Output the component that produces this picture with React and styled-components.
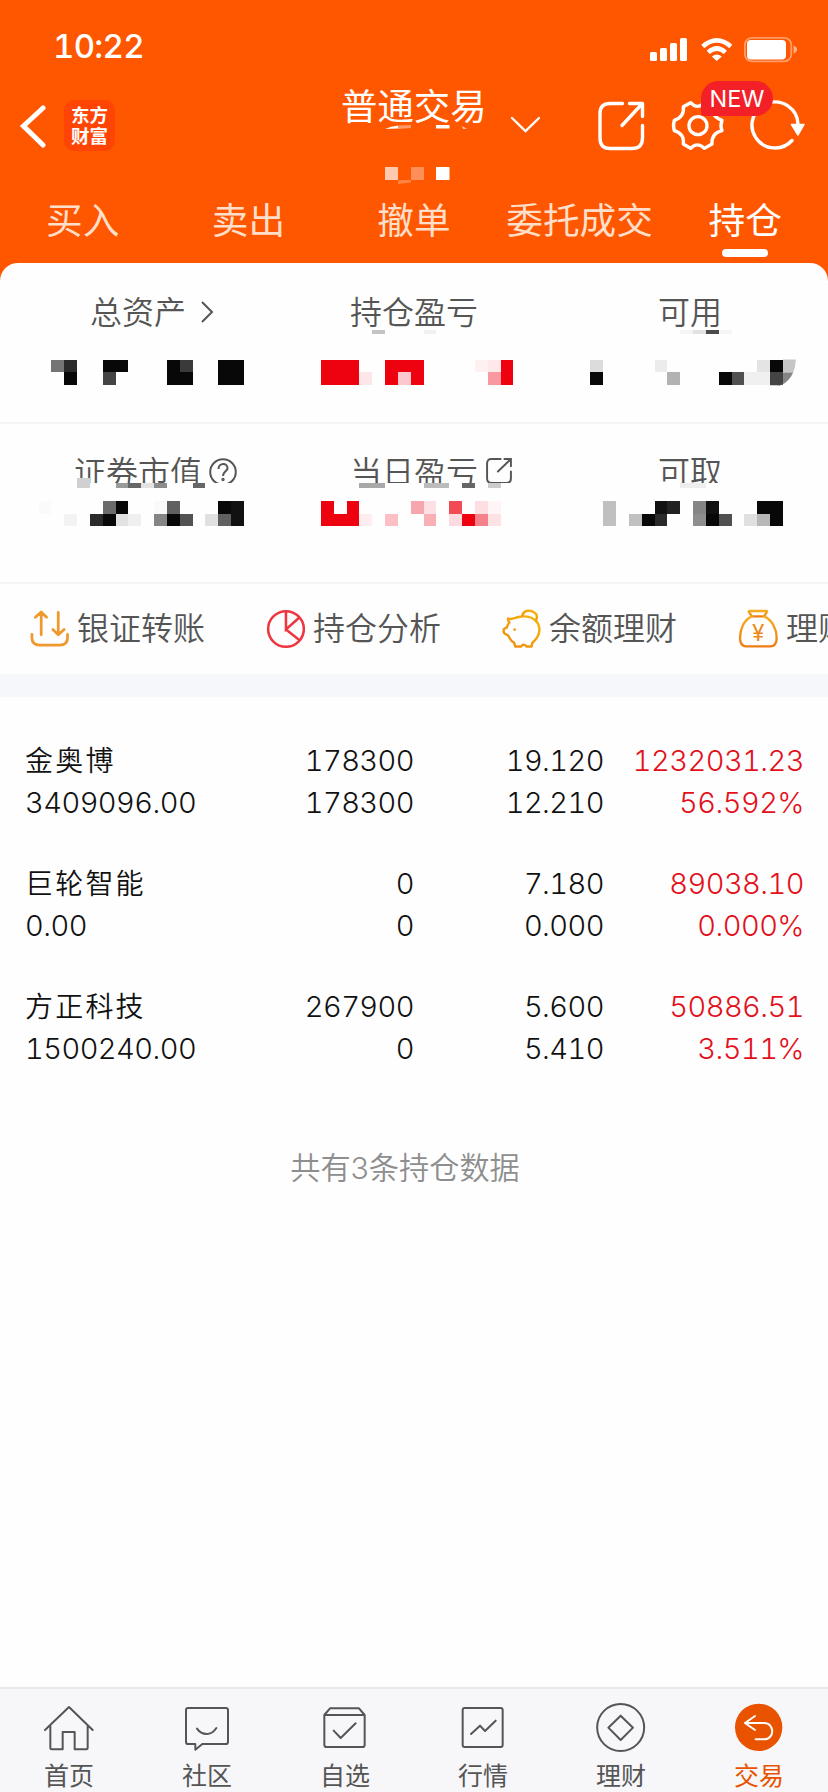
import React, { useState } from 'react';
import styled, { createGlobalStyle } from 'styled-components';


const GlobalStyle = createGlobalStyle`
	* {
		box-sizing: border-box;
	}

	body {
		margin: 0;
		background: #fefefe;
		font-family: Inter, 'Noto Sans CJK SC', sans-serif;
	}

	svg {
		display: block;
	}
`;

const Page = styled.div`
	display: flex;
	flex-direction: column;
	width: 828px;
	height: 1792px;
	overflow: hidden;
	background: #fefefe;
`;

const Header = styled.header`
	height: 281px;
	margin-bottom: -18px;
	background: #ff5600;
	color: #fff;
`;

const StatusBar = styled.div`
	display: flex;
	justify-content: space-between;
	height: 81px;
	padding: 26px 31px 0 53px;
`;

const Clock = styled.div`
	font-size: 33px;
	font-weight: 450;
	font-variant-numeric: tabular-nums;
	line-height: 41px;
	letter-spacing: -0.7px;
`;

const StatusIcons = styled.svg`
	width: 150px;
	height: 30px;
	margin-top: 9px;
`;

const TitleBar = styled.div`
	display: grid;
	grid-template-columns: 341px 1fr 230px;
	height: 108px;
`;

const BackArea = styled.div`
	display: flex;
	align-items: flex-start;
	gap: 17px;
	padding: 19px 0 0 19px;

	> svg {
		margin-top: 4px;
	}
`;

const Brand = styled.div`
	width: 51px;
	height: 51px;
	padding-top: 5px;
	border-radius: 10px;
	background: #ff4403;
	font-size: 18.5px;
	font-weight: 700;
	line-height: 21px;
	text-align: center;
`;

const TitleArea = styled.div`
	position: relative;
	display: flex;
	gap: 23px;

	h1 {
		margin: 0;
		padding-top: 2px;
		font-size: 36.4px;
		font-weight: 400;
		line-height: 48px;
	}

	> svg:nth-of-type(1) {
		margin-top: 35px;
	}
`;

const TitleMosaic = styled.svg`
	position: absolute;
	top: 43px;
	left: 44px;
`;

const Actions = styled.div`
	position: relative;
`;

const NewBadge = styled.span`
	position: absolute;
	top: 0;
	left: 103px;
	width: 72px;
	height: 35px;
	border-radius: 18px 18px 18px 2px;
	background: #f32028;
	font-size: 23.5px;
	line-height: 36px;
	text-align: center;
`;

const Tabs = styled.nav`
	display: grid;
	grid-template-columns: repeat(5, 1fr);
`;

const Tab = styled.button`
	display: flex;
	flex-direction: column;
	align-items: center;
	gap: 4px;
	height: 74px;
	padding: 8px 0 0;
	border: none;
	background: none;
	color: ${p => (p.$active ? '#fff' : '#ffdfc9')};
	font-family: inherit;
	font-size: 36.7px;
	line-height: 48px;
	white-space: nowrap;

	&::after {
		content: '';
		width: 46px;
		height: 8px;
		border-radius: 4px;
		background: ${p => (p.$active ? '#fff' : 'transparent')};
	}
`;

const Summary = styled.section`
	border-radius: 18px 18px 0 0;
	background: #fefefe;
`;

const SummaryRow = styled.div`
	display: grid;
	grid-template-columns: repeat(3, 1fr);
	height: ${p => p.$height}px;
	border-bottom: 2px solid #f4f4f5;
`;

const SummaryCell = styled.div`
	position: relative;
	padding-top: ${p => p.$pad}px;
	text-align: center;
`;

const SummaryLabel = styled.span`
	position: relative;
	display: inline-block;
	color: #555;
	font-size: 32px;
	font-weight: 350;
	line-height: 40px;

	svg {
		position: absolute;
		top: ${p => p.$iconTop || 5}px;
		left: calc(100% + ${p => p.$gap || 8}px);
	}
`;

const MosaicLayer = styled.svg`
	position: absolute;
	top: 0;
	left: 0;
`;

const Tools = styled.div`
	display: flex;
	gap: 61px;
	height: 90px;
	padding: 0 0 0 30px;
	overflow: hidden;
`;

const Tool = styled.div`
	display: flex;
	flex: none;
	align-items: center;
	gap: 8px;
	width: 175px;
	color: #555;
	font-size: 32px;
	font-weight: 350;
	line-height: 40px;
	white-space: nowrap;
`;

const Band = styled.div`
	height: 23px;
	background: #f6f7fa;
`;

const Holdings = styled.main`
	display: flex;
	flex: 1;
	flex-direction: column;
	gap: 39px;
	padding: 43px 24px 0 25px;
`;

const Holding = styled.div`
	display: grid;
	grid-template-columns: 190px 199px 190px 1fr;
	grid-auto-rows: 42px;
	color: #111;
	font-size: 29px;
	font-weight: 300;
	font-variant-numeric: tabular-nums;
	line-height: 42px;
	letter-spacing: -0.55px;
	text-align: right;
`;

const StockName = styled.span`
	font-size: 28px;
	font-weight: 350;
	letter-spacing: 2.2px;
	text-align: left;
`;

const MarketValue = styled.span`
	text-align: left;
`;

const Profit = styled.span`
	color: #e3101b;
`;

const Total = styled.p`
	margin: 39px 19px 0 0;
	color: #8e8e8e;
	font-size: 30.2px;
	font-weight: 350;
	line-height: 40px;
	text-align: center;
`;

const BottomNav = styled.nav`
	display: grid;
	grid-template-columns: repeat(6, 1fr);
	height: 105px;
	border-top: 2px solid #e9e9ec;
	background: #f7f7fa;
`;

const NavItem = styled.div`
	display: flex;
	flex-direction: column;
	align-items: center;
	gap: 7px;
	padding-top: 13px;
	color: ${p => (p.$active ? '#e95300' : '#555')};
	font-size: 25px;
	line-height: 34px;
`;


// one mosaic block is 77/6 px wide and high
const BLOCK = 77 / 6;
const K = '#080808';
const R = '#ee0210';

// [column, row, colour], columns and rows counted from the corner of the screen
const blocks = {
	total: [
		[4, 28, '#757575'], [5, 28, '#2b2b2b'], [5, 29, K], [8, 28, K], [9, 28, K], [8, 29, '#444'],
		[13, 28, K], [14, 28, '#3a3a3a'], [13, 29, K], [14, 29, K],
		[17, 28, K], [18, 28, K], [17, 29, K], [18, 29, K],
	],
	profit: [
		[25, 28, R], [26, 28, R], [27, 28, R], [25, 29, R], [26, 29, R], [27, 29, R], [28, 29, '#fde6e8'],
		[30, 28, R], [31, 28, R], [32, 28, R], [30, 29, R], [31, 29, '#fbc8cd'], [32, 29, R],
		[37, 28, '#fff1f2'], [38, 28, '#ffe8ea'], [38, 29, '#f998a0'], [39, 28, R], [39, 29, R],
	],
	usable: [
		[46, 28, '#dcdcdc'], [46, 29, K], [51, 28, '#ececec'], [52, 29, '#b2b2b2'],
		[56, 29, K], [57, 29, '#505050'], [58, 29, '#f0f0f0'], [59, 29, '#f0f0f0'], [59, 28, '#e4e4e4'],
		[60, 28, K], [60, 29, '#444'],
	],
	market: [
		[3, 39, '#fafafa'], [5, 40, '#f3f3f3'], [8, 39, '#6b6b6b'], [9, 39, K], [7, 40, '#2b2b2b'], [8, 40, K],
		[9, 40, '#e2e2e2'], [10, 40, '#efefef'], [12, 39, '#fafafa'], [13, 39, '#606060'],
		[12, 40, '#858585'], [13, 40, K], [14, 40, '#525252'], [16, 40, '#e0e0e0'],
		[17, 39, K], [18, 39, '#111'], [17, 40, '#606060'], [18, 40, '#111'],
	],
	today: [
		[25, 39, R], [27, 39, R], [25, 40, R], [26, 40, R], [27, 40, R], [28, 40, '#feedef'],
		[30, 40, '#fbc0c5'], [32, 39, '#f8a6ad'], [33, 39, '#fde0e3'], [33, 40, '#f9b0b5'],
		[35, 39, '#f34b55'], [35, 40, '#fddbe0'], [36, 40, R], [37, 39, '#fddfe1'],
		[37, 40, '#f5828a'], [38, 39, '#fff5f6'], [38, 40, '#fde2e4'],
	],
	cashable: [
		[47, 39, '#c0c0c0'], [47, 40, '#c0c0c0'], [49, 40, '#c0c0c0'], [50, 40, K], [51, 39, '#111'],
		[51, 40, '#2a2a2a'], [52, 39, '#222'], [54, 39, '#858585'], [54, 40, '#8e8e8e'],
		[55, 39, '#111'], [55, 40, K], [56, 40, '#505050'], [58, 40, '#e0e0e0'],
		[59, 39, K], [60, 39, K], [59, 40, '#b8b8b8'], [60, 40, K],
	],
};

// thin slices right below the labels: [column, colour]
const slices = {
	total: [],
	profit: [[29, '#c4c4c4'], [33, '#f0f0f0']],
	usable: [[53, '#f5f5f5'], [54, '#e2e2e2'], [55, '#4b4b4b'], [56, '#f5f5f5']],
	market: [[6, '#d0d0d0'], [9, '#9a9a9a'], [10, '#666'], [11, '#e2e2e2'], [12, '#8c8c8c'], [15, '#666']],
	today: [[28, '#a8a8a8'], [29, '#a8a8a8'], [33, '#bbb'], [34, '#bbb'], [36, '#666'], [38, '#ccc']],
	cashable: [[53, '#eee'], [54, '#eee']],
};

const holdings = [
	{ name: '金奥博', value: '3409096.00', count: '178300', free: '178300', price: '19.120', cost: '12.210', profit: '1232031.23', rate: '56.592%' },
	{ name: '巨轮智能', value: '0.00', count: '0', free: '0', price: '7.180', cost: '0.000', profit: '89038.10', rate: '0.000%' },
	{ name: '方正科技', value: '1500240.00', count: '267900', free: '0', price: '5.600', cost: '5.410', profit: '50886.51', rate: '3.511%' },
];


const Mosaic = ({ id, col, second }) => {
	const top = second ? 424 : 263;
	const cut = second ? 482.7 : 330.3;
	const sliceHeight = second ? 5 : 3.4;

	return (
		<MosaicLayer width='276' height='158' viewBox={`${col * 276} ${top} 276 158`} shapeRendering='crispEdges'>
			<rect x={col * 276} y={cut} width='276' height='50' fill='#fefefe' />
			{slices[id].map(([x, fill]) => (
				<rect key={x} x={x * BLOCK} y={cut} width={BLOCK} height={sliceHeight} fill={fill} />
			))}
			{blocks[id].map(([x, y, fill]) => (
				<rect key={`${x}-${y}`} x={x * BLOCK} y={y * BLOCK + 0.2} width={BLOCK} height={BLOCK} fill={fill} />
			))}
			{id === 'market' && <rect x='77' y='478' width='12.8' height='5' fill='#d0d0d0' />}
			{id === 'usable' && (
				<g shapeRendering='auto'>
					<path d='M783 359.5h12.8q0 7-2.6 12.9H783z' fill='#c6c6c6' />
					<path d='M783 372.4h10.2q-4 9-12.2 12.9h-4z' fill='#858585' />
					<path d='M770.2 372.4H783v11.4l-3 1.5h-9.8z' fill='#444' />
				</g>
			)}
		</MosaicLayer>
	);
};

const ShareGlyph = ({ size, stroke }) => (
	<svg width={size} height={size} viewBox='0 0 48 48' fill='none' stroke='currentColor' strokeWidth={stroke} strokeLinecap='round'>
		<path d='M27 2H10Q2 2 2 10V38Q2 46 10 46H38Q46 46 46 38V25' />
		<path d='M34 2H46V15M46 2L22 25' />
	</svg>
);

const navItems = [
	{
		label: '首页', x: 129,
		icon: <path d='M135 180L207 111L278 180M151 168V234Q151 238 155 238H188V186H224V238H259Q263 238 263 234V168' />,
	},
	{
		label: '社区', x: 543,
		icon: <path d='M564 114H677Q684 114 684 121V215Q684 222 677 222H607L586 239V222H564Q558 222 558 215V121Q558 114 564 114ZM591 176Q602 192 620 192Q638 192 649 174' />,
	},
	{
		label: '自选', x: 957,
		icon: <path d='M973 135H1094V224Q1094 231 1087 231H980Q973 231 973 224V135L990 115H1077L1094 135M1001 182L1022 204L1067 160' />,
	},
	{
		label: '行情', x: 129,
		icon: <path d='M152 114H260Q266 114 266 120V225Q266 231 260 231H152Q146 231 146 225V120Q146 114 152 114ZM171 192L198 167L213 183L245 152' />,
	},
	{
		label: '理财', x: 543,
		icon: <><circle cx='620' cy='172.500' r='70.500' /><path d='M620 137L657 173L620 210L583 173Z' /></>,
	},
	{
		label: '交易', x: 957, active: true,
		icon: (
			<>
				<circle cx='1034' cy='172' r='71' fill='#e95300' stroke='none' />
				<path stroke='#fff' strokeWidth='6' d='M1023 138L993 159L1023 180M993 159H1050C1083 159 1083 208 1050 208H1025' />
			</>
		),
	},
];


const App = () => {

	const tabs = ['买入', '卖出', '撤单', '委托成交', '持仓'];
	const [tab, setTab] = useState('持仓');

	return (
		<Page>
			<GlobalStyle />
			<Header>
				<StatusBar>
					<Clock>10:22</Clock>
					<StatusIcons viewBox='647 35 150 30' fill='#fff'>
						<rect x='650' y='52' width='7' height='9' rx='1.5' />
						<rect x='660' y='48' width='7' height='13' rx='1.5' />
						<rect x='670' y='43' width='7' height='18' rx='1.5' />
						<rect x='680' y='38' width='7' height='23' rx='1.5' />
						<g fill='none' stroke='#fff' strokeWidth='4.6'>
							<path d='M702.8 46.4Q716.8 34.4 730.8 46.4' />
							<path d='M708.2 52.4Q716.8 44.6 725.4 52.4' />
						</g>
						<path d='M711.8 56.4Q716.8 52.4 721.8 56.4L716.8 61Z' />
						<rect x='744.9' y='37.9' width='46.4' height='23.4' rx='7' fill='none' stroke='#ff9c68' strokeWidth='1.8' />
						<rect x='747' y='40' width='39' height='19.4' rx='4' />
						<path d='M793.6 45.5Q797 47 797 49.6T793.6 53.7Z' fill='#ffb088' />
					</StatusIcons>
				</StatusBar>
				<TitleBar>
					<BackArea>
						<svg width='28' height='44' viewBox='0 0 28 44' fill='none' stroke='#fff' strokeWidth='5' strokeLinecap='round'>
							<path d='M24 4L4.500 22L24 41' />
						</svg>
						<Brand>东方<br />财富</Brand>
					</BackArea>
					<TitleArea>
						<h1>普通交易</h1>
						<svg width='30' height='18' viewBox='0 0 30 18' fill='none' stroke='#fff' strokeWidth='2.4' strokeLinecap='round'>
							<path d='M2 2L15.5 15L29 2' />
						</svg>
						<TitleMosaic width='84' height='62' viewBox='385 124 84 62' fill='#fff'>
							<path d='M385 129Q391 126 398 125.500V128.500Z' />
							<path d='M398 125.500L411 125V128L398 129Z' fill='#ff9c68' />
							<rect x='436' y='125' width='13.5' height='3.500' />
							<path d='M462 126L467 129H463Z' fill='#ffc9a8' />
							<rect x='385' y='167' width='13' height='13' fill='#ffc9b0' />
							<rect x='411' y='167' width='13' height='13' fill='#ff8f58' />
							<rect x='436' y='167' width='13.5' height='13' />
							<path d='M398 180H411V182.500L398 184Z' fill='#ff8440' />
						</TitleMosaic>
					</TitleArea>
					<Actions>
						<svg width='230' height='80' viewBox='598 81 230 80' fill='none' stroke='#fff' strokeWidth='3.400' strokeLinecap='round' strokeLinejoin='round'>
							<path d='M622.5 103.500H610Q600 103.500 600 113.500V138Q600 148.500 610 148.500H632Q642.500 148.500 642.500 138V125.500' />
							<path d='M629.500 103.500H642.500V116.500M641 105L622 125.500' />
							<g transform='translate(590 76) scale(0.3333)' strokeWidth='10'>
								<path d='M302 80Q322 102 343 80L366 92Q364 122 396 133Q390 149 396 164Q364 172 366 204L343 217Q322 196 302 217L280 204Q284 174 253 164Q248 149 253 133Q284 122 280 92Z' />
								<circle cx='324' cy='149' r='27' />
							</g>
							<path d='M792 140.500A23 23 0 1 1 798 124' />
							<path d='M791.5 124.500H804L798 135Z' fill='#fff' strokeWidth='1.500' />
						</svg>
						<NewBadge>NEW</NewBadge>
					</Actions>
				</TitleBar>
				<Tabs>
					{tabs.map(t => (
						<Tab key={t} $active={t === tab} onClick={() => setTab(t)}>{t}</Tab>
					))}
				</Tabs>
			</Header>

			<Summary>
				<SummaryRow $height={161}>
					<SummaryCell $pad={30}>
						<SummaryLabel $gap={14} $iconTop={7}>
							总资产
							<svg width='14' height='24' viewBox='0 0 14 24' fill='none' stroke='#555' strokeWidth='2'>
								<path d='M2 2L12 12L2 22' />
							</svg>
						</SummaryLabel>
						<Mosaic id='total' col={0} />
					</SummaryCell>
					<SummaryCell $pad={30}>
						<SummaryLabel>持仓盈亏</SummaryLabel>
						<Mosaic id='profit' col={1} />
					</SummaryCell>
					<SummaryCell $pad={30}>
						<SummaryLabel>可用</SummaryLabel>
						<Mosaic id='usable' col={2} />
					</SummaryCell>
				</SummaryRow>
				<SummaryRow $height={160}>
					<SummaryCell $pad={29}>
						<SummaryLabel $gap={7}>
							证券市值
							<svg width='28' height='28' viewBox='0 0 28 28' fill='none' stroke='#555' strokeWidth='2'>
								<circle cx='14' cy='14' r='12.800' />
								<path d='M9.500 11C9.500 4.500 19 4.500 18.500 10.500C18 13.500 14 13.500 14 18' />
								<circle cx='14' cy='21.500' r='0.700' />
							</svg>
						</SummaryLabel>
						<Mosaic id='market' col={0} second />
					</SummaryCell>
					<SummaryCell $pad={29}>
						<SummaryLabel>
							当日盈亏
							<ShareGlyph size={26} stroke={3.6} />
						</SummaryLabel>
						<Mosaic id='today' col={1} second />
					</SummaryCell>
					<SummaryCell $pad={29}>
						<SummaryLabel>可取</SummaryLabel>
						<Mosaic id='cashable' col={2} second />
					</SummaryCell>
				</SummaryRow>
			</Summary>

			<Tools>
				<Tool>
					<svg width='40' height='40' viewBox='30 608 40 40' fill='none' stroke='#f0982c' strokeWidth='2.800' strokeLinecap='round' strokeLinejoin='round'>
						<path d='M41.500 634V611M35.500 616L41.500 610.500L47 616M59 611V633.500M53.500 628.500L59 634L65 628.500' />
						<path d='M32 633.500V637Q32 644.500 40 644.500H60.500Q68.500 644.500 68.500 637V633.500' />
					</svg>
					<span>银证转账</span>
				</Tool>
				<Tool>
					<svg width='40' height='40' viewBox='266 608 40 40' fill='none' stroke='#ee3640' strokeWidth='2.600'>
						<circle cx='286.500' cy='628' r='18.300' />
						<path d='M286.500 610V628.500L300.500 616M286.500 628.500L300.500 639.500' />
					</svg>
					<span>持仓分析</span>
				</Tool>
				<Tool>
					<svg width='40' height='40' viewBox='21 24 120 120' fill='none' stroke='url(#pig)' strokeWidth='7.500' strokeLinecap='round' strokeLinejoin='round'>
						<defs>
							<linearGradient id='pig' x1='0' y1='1' x2='1' y2='0'>
								<stop offset='0' stopColor='#f08a10' />
								<stop offset='1' stopColor='#f3b70c' />
							</linearGradient>
						</defs>
						<path d='M40 52C50 56 60 50 72 47C88 43 110 45 122 56C138 68 140 92 130 108C124 118 118 122 114 128L112 138H96Q93 131 84 133L80 138H62L58 126C48 122 44 112 40 104L29 98Q24 92 27 84L36 79Q38 70 44 64Q38 58 40 52Z' />
						<path d='M84 42C88 24 112 24 124 36C132 44 128 52 126 57' />
						<circle cx='60' cy='86' r='4' fill='#f09a10' stroke='none' />
					</svg>
					<span>余额理财</span>
				</Tool>
				<Tool>
					<svg width='40' height='40' viewBox='729 24 120 120' fill='none' stroke='url(#bag)' strokeWidth='7' strokeLinecap='round' strokeLinejoin='round'>
						<defs>
							<linearGradient id='bag' x1='0' y1='0' x2='0' y2='1'>
								<stop offset='0' stopColor='#f5ae20' />
								<stop offset='1' stopColor='#ef7d15' />
							</linearGradient>
						</defs>
						<path d='M764 30H814Q818 30 815 34L807 46H771L762 34Q760 30 764 30Z' />
						<path d='M771 46C746 56 735 86 735 110Q735 136 754 136H826Q845 136 845 110C845 86 832 56 807 46' />
						<text x='790' y='121' textAnchor='middle' fontSize='68' fontWeight='400' fill='#ef8a1a' stroke='none'>¥</text>
					</svg>
					<span>理财</span>
				</Tool>
			</Tools>
			<Band />

			<Holdings>
				{holdings.map(h => (
					<Holding key={h.name}>
						<StockName>{h.name}</StockName>
						<span>{h.count}</span>
						<span>{h.price}</span>
						<Profit>{h.profit}</Profit>
						<MarketValue>{h.value}</MarketValue>
						<span>{h.free}</span>
						<span>{h.cost}</span>
						<Profit>{h.rate}</Profit>
					</Holding>
				))}
				<Total>共有3条持仓数据</Total>
			</Holdings>

			<BottomNav>
				{navItems.map(item => (
					<NavItem key={item.label} $active={item.active}>
						<svg width='52' height='50' viewBox={`${item.x} 96 156 150`} fill='none' stroke='#555' strokeWidth='6' strokeLinecap='round' strokeLinejoin='round'>
							{item.icon}
						</svg>
						<span>{item.label}</span>
					</NavItem>
				))}
			</BottomNav>
		</Page>
	);
};

export default App;
